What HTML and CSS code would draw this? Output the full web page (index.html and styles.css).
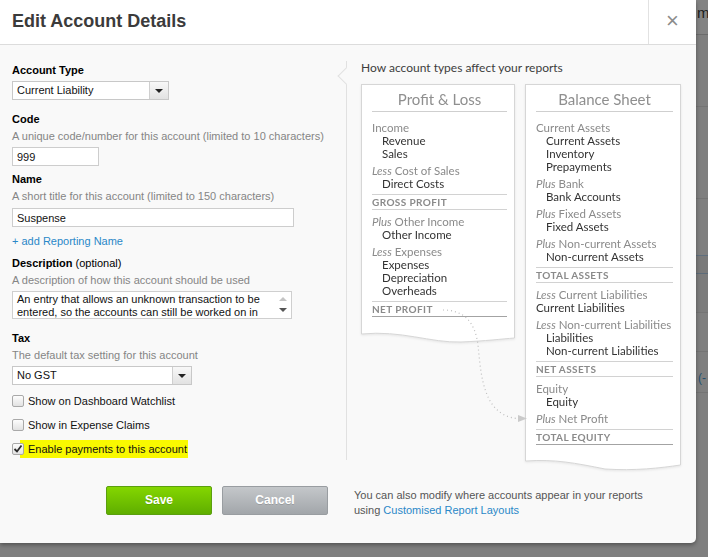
FILE: index.html
```html
<!DOCTYPE html>
<html>
    <head>
        <meta charset="utf-8">
        <link rel="stylesheet" href="styles.css">
    </head>
    <body>
        <div class="modal">
            <div class="modal-head">
                <h1>Edit Account Details</h1>
                <span class="close">&times;</span>
            </div>

            <div class="modal-main">
                <form class="account-form" onsubmit="return false">
                    <label class="lbl">Account Type</label>
                    <div class="select sel-type"><span>Current Liability</span><b class="arrow"></b></div>

                    <label class="lbl gap-big">Code</label>
                    <p class="hint">A unique code/number for this account (limited to 10 characters)</p>
                    <input class="input in-code" value="999">

                    <label class="lbl gap-small">Name</label>
                    <p class="hint">A short title for this account (limited to 150 characters)</p>
                    <input class="input in-name" value="Suspense">

                    <a class="add-link" href="#">+ add Reporting Name</a>

                    <label class="lbl gap-desc">Description <span class="opt">(optional)</span></label>
                    <p class="hint">A description of how this account should be used</p>
                    <div class="textarea">
                        <div class="ta-text">An entry that allows an unknown transaction to be<br>entered, so the accounts can still be worked on in</div>
                        <div class="ta-scroll"><i class="up"></i><i class="down"></i></div>
                    </div>

                    <label class="lbl gap-big">Tax</label>
                    <p class="hint">The default tax setting for this account</p>
                    <div class="select sel-tax"><span>No GST</span><b class="arrow"></b></div>

                    <div class="check-row first"><span class="box"></span><span>Show on Dashboard Watchlist</span></div>
                    <div class="check-row"><span class="box"></span><span>Show in Expense Claims</span></div>
                    <div class="check-row">
                        <span class="box checked">
                            <svg width="10" height="10" viewBox="0 0 10 10"><path d="M1.5 5 L4 7.5 L8.5 1.5"/></svg>
                        </span>
                        <span class="hl">Enable payments to this account</span>
                    </div>
                </form>

                <div class="divider"></div>

                <div class="reports">
                    <p class="reports-title">How account types affect your reports</p>
                    <div class="sheets">
                        <div class="sheet sheet-pl">
                            <div class="sheet-body">
                                <div class="sheet-title">Profit &amp; Loss</div>
                                <div class="sheet-list">
                                    <div class="grp">
                                        <div class="row cat">Income</div>
                                        <div class="row sub">Revenue</div>
                                        <div class="row sub">Sales</div>
                                    </div>
                                    <div class="grp">
                                        <div class="row cat"><em>Less</em> Cost of Sales</div>
                                        <div class="row sub">Direct Costs</div>
                                    </div>
                                    <div class="total">GROSS PROFIT</div>
                                    <div class="grp">
                                        <div class="row cat"><em>Plus</em> Other Income</div>
                                        <div class="row sub">Other Income</div>
                                    </div>
                                    <div class="grp">
                                        <div class="row cat"><em>Less</em> Expenses</div>
                                        <div class="row sub">Expenses</div>
                                        <div class="row sub">Depreciation</div>
                                        <div class="row sub">Overheads</div>
                                    </div>
                                    <div class="total final">NET PROFIT</div>
                                </div>
                            </div>
                            <svg class="wave" width="154" height="12" viewBox="0 0 154 12">
                                <path class="wave-fill" d="M0 0 V3 C40 -1 70 12 100 11 C125 10 140 8 154 7 V0 Z"/>
                                <path class="wave-line" d="M0.5 0 V3 C40 -1 70 12 100 11 C125 10 140 8 153.5 7 V0"/>
                            </svg>
                        </div>

                        <div class="sheet sheet-bs">
                            <div class="sheet-body">
                                <div class="sheet-title">Balance Sheet</div>
                                <div class="sheet-list">
                                    <div class="grp">
                                        <div class="row cat">Current Assets</div>
                                        <div class="row sub">Current Assets</div>
                                        <div class="row sub">Inventory</div>
                                        <div class="row sub">Prepayments</div>
                                    </div>
                                    <div class="grp">
                                        <div class="row cat"><em>Plus</em> Bank</div>
                                        <div class="row sub">Bank Accounts</div>
                                    </div>
                                    <div class="grp">
                                        <div class="row cat"><em>Plus</em> Fixed Assets</div>
                                        <div class="row sub">Fixed Assets</div>
                                    </div>
                                    <div class="grp">
                                        <div class="row cat"><em>Plus</em> Non-current Assets</div>
                                        <div class="row sub">Non-current Assets</div>
                                    </div>
                                    <div class="total">TOTAL ASSETS</div>
                                    <div class="grp">
                                        <div class="row cat"><em>Less</em> Current Liabilities</div>
                                        <div class="row">Current Liabilities</div>
                                    </div>
                                    <div class="grp">
                                        <div class="row cat"><em>Less</em> Non-current Liabilities</div>
                                        <div class="row sub">Liabilities</div>
                                        <div class="row sub">Non-current Liabilities</div>
                                    </div>
                                    <div class="total">NET ASSETS</div>
                                    <div class="grp">
                                        <div class="row cat">Equity</div>
                                        <div class="row sub">Equity</div>
                                    </div>
                                    <div class="grp">
                                        <div class="row cat"><em>Plus</em> Net Profit</div>
                                    </div>
                                    <div class="total final">TOTAL EQUITY</div>
                                </div>
                            </div>
                            <svg class="wave" width="156" height="12" viewBox="0 0 156 12">
                                <path class="wave-fill" d="M0 0 V2 C30 0 50 4 80 10 C110 12 135 9 156 6 V0 Z"/>
                                <path class="wave-line" d="M0.5 0 V2 C30 0 50 4 80 10 C110 12 135 9 155.5 6 V0"/>
                            </svg>
                        </div>
                    </div>

                    <svg class="flow-arrow" width="349" height="425" viewBox="0 0 349 425">
                        <path class="flow-line" d="M96 265 C116 265 128 276 131 300 C134 330 136 370 170 373.5"/>
                        <polygon class="flow-head" points="171,370 180,373.5 171,377"/>
                    </svg>
                </div>
            </div>

            <div class="modal-foot">
                <span class="btn btn-save">Save</span>
                <span class="btn btn-cancel">Cancel</span>
                <p class="foot-note">You can also modify where accounts appear in your reports<br>using <a href="#">Customised Report Layouts</a></p>
            </div>
        </div>

        <div class="behind">
            <div class="bh bh-top">mi</div>
            <div class="bh bh-1"></div>
            <div class="bh bh-2"></div>
            <div class="bh bh-3"></div>
            <div class="bh bh-4"></div>
            <div class="bh bh-5"></div>
            <div class="bh bh-6"></div>
            <div class="bh bh-7">(-</div>
        </div>
    </body>
</html>
```

FILE: styles.css
```css
body{
    margin: 0;
    width: 708px;
    height: 557px;
    overflow: hidden;
    display: flex;
    align-items: flex-start;
    background: #7f7f7f;
    font-family: "Liberation Sans", Arial, sans-serif;
}

/* dialog */
.modal{
    position: relative;
    z-index: 1;
    width: 696px;
    height: 543px;
    flex: none;
    display: flex;
    flex-direction: column;
    background: #f9f9f9;
    border-radius: 0 0 5px 0;
    box-shadow: 0 2px 4px rgba(0,0,0,.35);
}
.modal-head{
    height: 44px;
    display: flex;
    background: #fff;
    border-bottom: 1px solid #dcdcdc;
}
.modal-head h1{
    flex: 1;
    margin: 0;
    padding-left: 12px;
    font-size: 18px;
    line-height: 42px;
    color: #3b3b3b;
}
.close{
    width: 47px;
    border-left: 1px solid #e2e2e2;
    text-align: center;
    font-size: 22px;
    line-height: 42px;
    color: #8c8c8c;
}
.modal-main{
    height: 425px;
    display: flex;
}

/* left form */
.account-form{
    width: 346px;
    box-sizing: border-box;
    margin: 0;
    padding: 18px 0 0 12px;
    font-size: 11px;
    color: #111;
}
.lbl{
    display: block;
    line-height: 14px;
    font-weight: bold;
    color: #000;
}
.lbl .opt{
    font-weight: normal;
}
.gap-big{ margin-top: 12px; }
.gap-small{ margin-top: 6px; }
.gap-desc{ margin-top: 8px; }
.hint{
    margin: 3px 0 0;
    line-height: 14px;
    color: #858585;
}
.input{
    display: block;
    height: 19px;
    box-sizing: border-box;
    margin-top: 4px;
    padding: 0 4px;
    border: 1px solid #cdcdcd;
    background: #fff;
    font: 11px "Liberation Sans", Arial, sans-serif;
    color: #111;
    outline: none;
}
.in-code{ width: 87px; }
.in-name{ width: 282px; margin-top: 5px; }
.add-link{
    display: block;
    margin-top: 7px;
    line-height: 14px;
    color: #2a88c8;
    text-decoration: none;
}
.select{
    display: flex;
    height: 19px;
    box-sizing: border-box;
    margin-top: 4px;
    border: 1px solid #c8c8c8;
    background: #fff;
}
.sel-type{ width: 157px; }
.sel-tax{ width: 180px; }
.select span{
    flex: 1;
    padding-left: 4px;
    line-height: 17px;
}
.select .arrow{
    width: 18px;
    display: flex;
    align-items: center;
    justify-content: center;
    border-left: 1px solid #cfcfcf;
    background: linear-gradient(#f8f8f8, #e2e2e2);
}
.select .arrow::after{
    content: "";
    border-left: 4px solid transparent;
    border-right: 4px solid transparent;
    border-top: 4px solid #222;
}
.textarea{
    width: 280px;
    height: 28px;
    box-sizing: border-box;
    margin-top: 4px;
    display: flex;
    border: 1px solid #cfcfcf;
    background: #fff;
}
.ta-text{
    flex: 1;
    padding: 1px 0 0 4px;
    line-height: 13px;
    white-space: nowrap;
    overflow: hidden;
}
.ta-scroll{
    width: 16px;
    display: flex;
    flex-direction: column;
    align-items: center;
    justify-content: space-between;
    padding: 5px 0 6px;
}
.ta-scroll i{
    border-left: 4px solid transparent;
    border-right: 4px solid transparent;
}
.ta-scroll .up{ border-bottom: 4px solid #c4c4c4; }
.ta-scroll .down{ border-top: 4px solid #555; }

.check-row{
    display: flex;
    align-items: center;
    height: 14px;
    margin-top: 10px;
}
.check-row.first{ margin-top: 9px; }
.box{
    position: relative;
    z-index: 1;
    width: 12px;
    height: 12px;
    box-sizing: border-box;
    margin-right: 4px;
    border: 1px solid #a9a9a9;
    border-radius: 2px;
    background: linear-gradient(#fdfdfd, #e2e2e2);
}
.box svg{
    display: block;
}
.box path{
    fill: none;
    stroke: #2a2a2a;
    stroke-width: 1.8;
}
.hl{
    margin-left: -8px;
    padding: 3px 1px 3px 8px;
    background: #f9f900;
}

.divider{
    position: relative;
    width: 1px;
    height: 399px;
    margin-top: 16px;
    background: #e1e1e1;
}
.divider::before{
    content: "";
    position: absolute;
    left: -6px;
    top: 9px;
    width: 11px;
    height: 11px;
    background: #f9f9f9;
    border-left: 1px solid #e1e1e1;
    border-bottom: 1px solid #e1e1e1;
    transform: rotate(45deg);
}

/* report sheets */
.reports{
    position: relative;
    flex: 1;
    padding: 15px 0 0 14px;
    font-family: Lato, "Open Sans", sans-serif;
}
.reports-title{
    margin: 0;
    font-size: 12px;
    line-height: 16px;
    color: #3d3d3d;
}
.sheets{
    display: flex;
    align-items: flex-start;
    gap: 10px;
    margin-top: 8px;
}
.sheet{
    width: 154px;
    filter: drop-shadow(0 1px 1px rgba(0,0,0,.08));
}
.sheet-bs{ width: 156px; }
.sheet-body{
    padding: 0 7px 14px 10px;
    background: #fff;
    border: 1px solid #d6d6d6;
    border-bottom: 0;
}
.sheet-title{
    padding: 4px 0 2px;
    border-bottom: 1px solid #cfcfcf;
    text-align: center;
    font-size: 15px;
    line-height: 20px;
    color: #8f8f8f;
}
.sheet-list{
    margin-top: 9px;
}
.grp{
    margin-bottom: 4px;
}
.row{
    font-size: 11.5px;
    line-height: 13px;
    color: #333;
    white-space: nowrap;
}
.row.cat{ color: #8a8a8a; }
.row.sub{ padding-left: 10px; }
.total{
    margin-bottom: 5px;
    border-top: 1px solid #d2d2d2;
    border-bottom: 1px solid #d2d2d2;
    font-size: 10px;
    line-height: 14px;
    font-weight: bold;
    letter-spacing: .4px;
    color: #8a8a8a;
}
.total.final{
    margin-bottom: 0;
    border-bottom-color: #a3a3a3;
}
.wave{
    display: block;
}
.wave-fill{ fill: #fff; }
.wave-line{
    fill: none;
    stroke: #d6d6d6;
}
.flow-arrow{
    position: absolute;
    left: 0;
    top: 0;
    pointer-events: none;
}
.flow-line{
    fill: none;
    stroke: #bdbdbd;
    stroke-width: 1.2;
    stroke-dasharray: 1 3;
}
.flow-head{ fill: #cacaca; }

/* footer */
.modal-foot{
    display: flex;
    align-items: flex-start;
    padding: 16px 0 0 106px;
}
.btn{
    width: 106px;
    height: 29px;
    box-sizing: border-box;
    border-radius: 2px;
    text-align: center;
    font-size: 12px;
    font-weight: bold;
    line-height: 27px;
    color: #fff;
    text-shadow: 0 1px 0 rgba(0,0,0,.15);
}
.btn-save{
    background: linear-gradient(#84d600, #5fae00);
    border: 1px solid #5b9f0f;
}
.btn-cancel{
    margin-left: 10px;
    background: linear-gradient(#c4c7ca, #a2a6aa);
    border: 1px solid #999da1;
}
.foot-note{
    margin: 2px 0 0 26px;
    font-size: 11px;
    line-height: 15px;
    color: #555;
}
.foot-note a{
    color: #2a88c8;
    text-decoration: none;
}

/* page under the overlay */
.behind{
    flex: 1;
    height: 557px;
    overflow: hidden;
}
.bh{
    white-space: nowrap;
    border-bottom: 1px solid #747474;
}
.bh-top{
    height: 34px;
    padding-left: 1px;
    background: #838383;
    border-bottom-color: #6c6c6c;
    font-size: 15px;
    line-height: 26px;
    color: #1c1c1c;
}
.bh-1{ height: 71px; }
.bh-2{ height: 91px; }
.bh-3{ height: 56px; border-bottom-color: #5f6f7e; }
.bh-4{ height: 17px; background: #7a7a7a; border-bottom-color: #5d6c7a; }
.bh-5{ height: 38px; background: #7c7c7c; }
.bh-6{ height: 38px; }
.bh-7{
    height: 40px;
    padding-left: 2px;
    font-size: 12px;
    line-height: 52px;
    color: #23506f;
}
```
